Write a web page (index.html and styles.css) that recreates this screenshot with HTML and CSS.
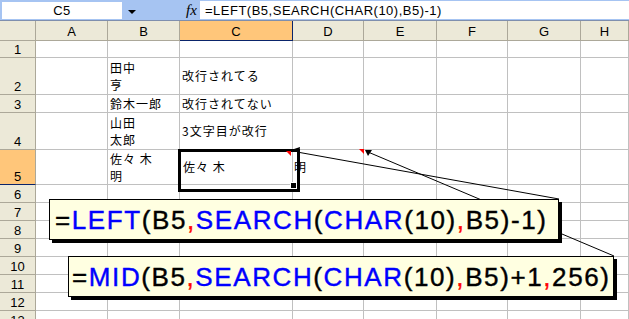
FILE: index.html
```html
<!DOCTYPE html>
<html lang="ja">
<head>
    <meta charset="UTF-8">
    <meta name="viewport" content="width=device-width, initial-scale=1.0">
    <title>セル内改行の分割</title>
    <link rel="stylesheet" href="styles.css">
</head>
<body>
    <div class="formula-bar">
        <div class="name-box">C5</div>
        <div class="name-drop"></div>
        <div class="fx">fx</div>
        <div class="formula">=LEFT(B5,SEARCH(CHAR(10),B5)-1)</div>
    </div>

    <div class="sheet">
        <!-- column headers -->
        <div class="h corner"></div>
        <div class="h ch">A</div>
        <div class="h ch">B</div>
        <div class="h ch sel">C</div>
        <div class="h ch">D</div>
        <div class="h ch">E</div>
        <div class="h ch">F</div>
        <div class="h ch">G</div>
        <div class="h ch">H</div>

        <!-- row 1 -->
        <div class="h rh">1</div>
        <div class="c"></div><div class="c"></div><div class="c"></div><div class="c"></div>
        <div class="c"></div><div class="c"></div><div class="c"></div><div class="c"></div>

        <!-- row 2 -->
        <div class="h rh">2</div>
        <div class="c"></div>
        <div class="c t">田中<br>亨</div>
        <div class="c t">改行されてる</div>
        <div class="c"></div><div class="c"></div><div class="c"></div><div class="c"></div><div class="c"></div>

        <!-- row 3 -->
        <div class="h rh">3</div>
        <div class="c"></div>
        <div class="c t">鈴木一郎</div>
        <div class="c t">改行されてない</div>
        <div class="c"></div><div class="c"></div><div class="c"></div><div class="c"></div><div class="c"></div>

        <!-- row 4 -->
        <div class="h rh">4</div>
        <div class="c"></div>
        <div class="c t">山田<br>太郎</div>
        <div class="c t">3文字目が改行</div>
        <div class="c"></div><div class="c"></div><div class="c"></div><div class="c"></div><div class="c"></div>

        <!-- row 5 -->
        <div class="h rh sel">5</div>
        <div class="c"></div>
        <div class="c t">佐々 木<br>明</div>
        <div class="c t active">佐々 木</div>
        <div class="c t spill">明</div>
        <div class="c"></div><div class="c"></div><div class="c"></div><div class="c"></div>

        <!-- rows 6 - 13 -->
        <div class="h rh">6</div>
        <div class="c"></div><div class="c"></div><div class="c"></div><div class="c"></div>
        <div class="c"></div><div class="c"></div><div class="c"></div><div class="c"></div>
        <div class="h rh">7</div>
        <div class="c"></div><div class="c"></div><div class="c"></div><div class="c"></div>
        <div class="c"></div><div class="c"></div><div class="c"></div><div class="c"></div>
        <div class="h rh">8</div>
        <div class="c"></div><div class="c"></div><div class="c"></div><div class="c"></div>
        <div class="c"></div><div class="c"></div><div class="c"></div><div class="c"></div>
        <div class="h rh">9</div>
        <div class="c"></div><div class="c"></div><div class="c"></div><div class="c"></div>
        <div class="c"></div><div class="c"></div><div class="c"></div><div class="c"></div>
        <div class="h rh">10</div>
        <div class="c"></div><div class="c"></div><div class="c"></div><div class="c"></div>
        <div class="c"></div><div class="c"></div><div class="c"></div><div class="c"></div>
        <div class="h rh">11</div>
        <div class="c"></div><div class="c"></div><div class="c"></div><div class="c"></div>
        <div class="c"></div><div class="c"></div><div class="c"></div><div class="c"></div>
        <div class="h rh">12</div>
        <div class="c"></div><div class="c"></div><div class="c"></div><div class="c"></div>
        <div class="c"></div><div class="c"></div><div class="c"></div><div class="c"></div>
        <div class="h rh">13</div>
        <div class="c"></div><div class="c"></div><div class="c"></div><div class="c"></div>
        <div class="c"></div><div class="c"></div><div class="c"></div><div class="c"></div>
    </div>

    <!-- comment arrows -->
    <svg class="arrows" width="629" height="319" viewBox="0 0 629 319">
        <polygon points="286,151 291,151 291,156" fill="#ff0000"/>
        <polygon points="359,149 364,149 364,154" fill="#ff0000"/>
        <line x1="297" y1="152" x2="559" y2="199" stroke="#000" stroke-width="1"/>
        <line x1="368" y1="152" x2="614" y2="256" stroke="#000" stroke-width="1"/>
        <polygon points="294,149 300,147 299,154" fill="#000"/>
        <polygon points="365,150 372,150 368,156" fill="#000"/>
    </svg>

    <div class="callout callout-left">=<span class="fn">LEFT</span>(B5<span class="sep">,</span><span class="fn">SEARCH</span>(<span class="fn">CHAR</span>(10)<span class="sep">,</span>B5)-1)</div>
    <div class="callout callout-mid">=<span class="fn">MID</span>(B5<span class="sep">,</span><span class="fn">SEARCH</span>(<span class="fn">CHAR</span>(10)<span class="sep">,</span>B5)+1<span class="sep">,</span>256)</div>
</body>
</html>
```

FILE: styles.css
```css
* {
    box-sizing: border-box;
}

body {
    margin: 0;
    width: 629px;
    height: 319px;
    overflow: hidden;
    position: relative;
    background: #ffffff;
    font-family: "Liberation Sans", Arial, sans-serif;
    color: #000;
}

/* formula bar */
.formula-bar {
    display: flex;
    height: 21px;
    background: #a6c4f2;
    border-bottom: 1px solid #7f8fae;
}

.name-box {
    width: 120px;
    height: 17px;
    margin: 2px 0 0 2px;
    background: #fff;
    font-size: 13px;
    line-height: 18px;
    text-align: center;
    letter-spacing: 0.5px;
}

.name-drop {
    width: 0;
    height: 0;
    margin: 10px 0 0 6px;
    border-left: 4px solid transparent;
    border-right: 4px solid transparent;
    border-top: 4px solid #000;
}

.fx {
    width: 13px;
    margin-left: 50px;
    font-family: "Liberation Serif", serif;
    font-style: italic;
    font-size: 15px;
    line-height: 20px;
}

.formula {
    flex: 1;
    height: 18px;
    margin: 1px 0 0 1px;
    padding: 1px 0 0 5px;
    background: #fff;
    font-size: 13px;
    line-height: 17px;
    letter-spacing: 0.5px;
    white-space: nowrap;
}

/* sheet grid */
.sheet {
    display: grid;
    grid-template-columns: 36px 72px 72px 113px 71px 73px 71px 73px 48px;
    grid-template-rows: 20px 17px 37px 18px 37px 35px repeat(8, 18px);
}

.c {
    border-right: 1px solid #c0c0c0;
    border-bottom: 1px solid #c0c0c0;
}

.h {
    background: #ece9d8;
    border-right: 1px solid #aca899;
    border-bottom: 1px solid #aca899;
    font-size: 13px;
    text-align: center;
}

.ch {
    padding-top: 3px;
    line-height: 15px;
}

.rh {
    display: flex;
    align-items: flex-end;
    justify-content: center;
    line-height: 13px;
    padding-bottom: 1px;
}

.h.sel {
    background: #ffc67a;
    border-bottom-color: #0a246a;
}

.ch.sel {
    border-right-color: #0a246a;
}

.t {
    display: flex;
    align-items: center;
    padding-left: 2px;
    font-family: "Noto Sans CJK JP", sans-serif;
    font-size: 12px;
    letter-spacing: 1px;
    line-height: 17.5px;
    white-space: nowrap;
}

.spill {
    padding-left: 1px;
}

.active {
    position: relative;
    padding-left: 3px;
}

.active::before {
    content: "";
    position: absolute;
    left: -2px;
    top: -1px;
    width: 116px;
    height: 37px;
    border: 3px solid #000;
}

.active::after {
    content: "";
    position: absolute;
    left: 110px;
    top: 32px;
    width: 5px;
    height: 5px;
    background: #000;
    border: 1px solid #fff;
}

/* arrows and callouts lie over the sheet */
.arrows {
    position: absolute;
    left: 0;
    top: 0;
}

.callout {
    position: absolute;
    height: 41px;
    background: #ffffe1;
    border: 1px solid #000;
    box-shadow: 3px 3px 0 #000;
    font-size: 26px;
    line-height: 40px;
    letter-spacing: 1.6px;
    white-space: nowrap;
    -webkit-text-stroke: 0.4px currentColor;
}

.callout-left {
    left: 49px;
    top: 199px;
    width: 510px;
    padding-left: 5px;
}

.callout-mid {
    left: 68px;
    top: 256px;
    width: 546px;
    padding-left: 3px;
}

.fn {
    color: #0000ff;
}

.sep {
    color: #ff0000;
}
```
